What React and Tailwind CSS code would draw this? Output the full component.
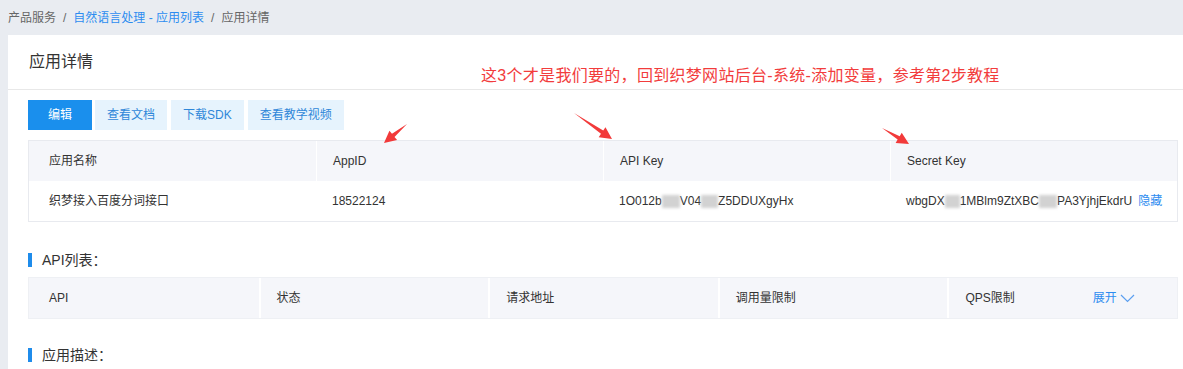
import React from "react";

const arrows = [
  { t: [407, 124], p: [384, 143] },
  { t: [574, 113], p: [612, 139] },
  { t: [882, 128], p: [909, 144] },
];

// red annotation arrow as one polygon: thin tail, wide head
const arrowPoints = ({ t, p }) => {
  const dx = p[0] - t[0];
  const dy = p[1] - t[1];
  const len = Math.hypot(dx, dy);
  const ux = dx / len;
  const uy = dy / len;
  const nx = -uy;
  const ny = ux;
  const h = 12;
  const bx = p[0] - ux * h;
  const by = p[1] - uy * h;
  const pts = [
    [t[0], t[1]],
    [bx + nx * 2, by + ny * 2],
    [bx + nx * 6, by + ny * 6],
    [p[0], p[1]],
    [bx - nx * 6, by - ny * 6],
    [bx - nx * 2, by - ny * 2],
  ];
  return pts.map((q) => q.join(",")).join(" ");
};

const Blur = ({ w = 16 }) => (
  <span
    className="inline-block h-[13px] bg-[#d2d2d2] blur-[1.5px] align-middle"
    style={{ width: w }}
  />
);

const SectionTitle = ({ children, className }) => (
  <div className={`flex items-center h-[20px] ${className}`}>
    <span className="w-[4px] h-[14px] bg-[#1f8ceb]" />
    <span className="ml-[10px] text-[14px] text-[#333]">{children}</span>
  </div>
);

const App = () => {
  return (
    <div
      className="relative min-h-[369px] bg-[#e9ecf1] overflow-hidden"
      style={{ fontFamily: '"Liberation Sans", "Noto Sans CJK SC", sans-serif' }}
    >
      {/* Breadcrumb */}
      <div className="h-[35px] flex items-center px-2 text-[12px] text-[#666]">
        <span>产品服务</span>
        <span className="mx-[7px]">/</span>
        <span className="text-[#2d8cf0]">自然语言处理 - 应用列表</span>
        <span className="mx-[7px]">/</span>
        <span>应用详情</span>
      </div>

      <div className="ml-2 bg-white min-h-[334px]">
        {/* Title */}
        <div className="h-[55px] flex items-center pl-[21px] border-b border-[#e8e8e8] text-[16px] text-[#333]">
          应用详情
        </div>

        <div className="pl-5 pr-[5px] pt-[10px]">
          {/* Buttons */}
          <div className="flex gap-[3px] text-[12px]">
            <button className="h-[30px] min-w-[64px] px-3 bg-[#1a8fed] text-white">编辑</button>
            <button className="h-[30px] px-3 bg-[#e6f3fd] text-[#2f87d9]">查看文档</button>
            <button className="h-[30px] px-3 bg-[#e6f3fd] text-[#2f87d9] ml-[1px]">下载SDK</button>
            <button className="h-[30px] px-3 bg-[#e6f3fd] text-[#2f87d9] ml-[1px]">查看教学视频</button>
          </div>

          {/* App info table */}
          <div className="mt-[10px] border border-[#e8eaef] text-[12px] text-[#333]">
            <div className="grid grid-cols-4 h-[40px] bg-[#f5f6fa]">
              <div className="flex items-center pl-[20px]">应用名称</div>
              <div className="flex items-center pl-4 border-l border-white">AppID</div>
              <div className="flex items-center pl-4 border-l border-white">API Key</div>
              <div className="flex items-center pl-4 border-l border-white">Secret Key</div>
            </div>
            <div className="grid grid-cols-4 h-[40px]">
              <div className="flex items-center pl-[20px]">织梦接入百度分词接口</div>
              <div className="flex items-center pl-4">18522124</div>
              <div className="flex items-center pl-4 whitespace-nowrap">
                1O012b<Blur w={18} />V04<Blur w={17} />Z5DDUXgyHx
              </div>
              <div className="flex items-center pl-4 whitespace-nowrap">
                wbgDX<Blur w={15} />1MBlm9ZtXBC<Blur w={18} />PA3YjhjEkdrU
                <span className="ml-[6px] text-[#2d8cf0]">隐藏</span>
              </div>
            </div>
          </div>

          <SectionTitle className="mt-[28px]">API列表：</SectionTitle>

          {/* API table */}
          <div className="mt-[7px] border border-[#eef0f4] text-[12px] text-[#333]">
            <div className="grid grid-cols-5 h-[40px] bg-[#f5f6fa]">
              <div className="flex items-center pl-[20px]">API</div>
              <div className="flex items-center pl-4 border-l-2 border-white">状态</div>
              <div className="flex items-center pl-4 border-l-2 border-white">请求地址</div>
              <div className="flex items-center pl-4 border-l-2 border-white">调用量限制</div>
              <div className="flex items-center pl-4 border-l-2 border-white">
                <span>QPS限制</span>
                <span className="ml-[78px] flex items-center text-[#2d8cf0]">
                  展开
                  <svg width="15" height="9" viewBox="0 0 15 9" className="ml-[3px]">
                    <polyline points="1,1 7.5,7.5 14,1" fill="none" stroke="#5b9ff0" strokeWidth="1.2" />
                  </svg>
                </span>
              </div>
            </div>
          </div>

          <SectionTitle className="mt-[26px]">应用描述：</SectionTitle>
        </div>
      </div>

      {/* Annotations */}
      <div className="absolute left-[481px] top-[66px] text-[16px] tracking-[0.3px] text-[#f23c3c] whitespace-nowrap leading-[20px]">
        这3个才是我们要的，回到织梦网站后台-系统-添加变量，参考第2步教程
      </div>
      <svg className="absolute inset-0 pointer-events-none" width="1183" height="369">
        {arrows.map((a, i) => (
          <polygon key={i} points={arrowPoints(a)} fill="#f23a3a" />
        ))}
      </svg>
    </div>
  );
};

export default App;
